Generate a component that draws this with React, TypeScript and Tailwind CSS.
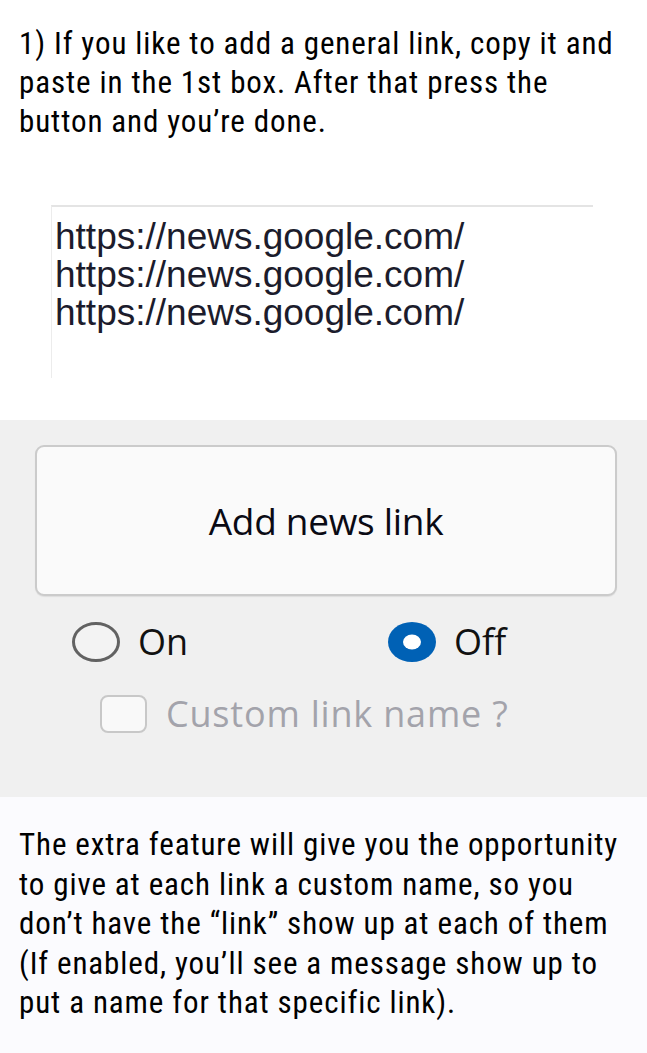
import { useState } from 'react';

const narrow = "font-['Liberation_Sans_Narrow','Arial_Narrow','Roboto_Condensed',sans-serif] font-stretch-condensed";

const Radio = ({ checked, label, onClick }: { checked: boolean; label: string; onClick: () => void }) => (
  <div className="flex items-center gap-[17px] cursor-pointer" onClick={onClick}>
    <svg width="50" height="42" viewBox="0 0 50 42">
      {checked ? (
        <>
          <ellipse cx="25" cy="21" rx="24" ry="20" fill="#0061b5" />
          <ellipse cx="25" cy="21" rx="9" ry="7.5" fill="#ffffff" />
        </>
      ) : (
        <ellipse cx="25" cy="21" rx="22.5" ry="18.5" fill="#f3f3f3" stroke="#626262" strokeWidth="3" />
      )}
    </svg>
    <span className="text-[36px] leading-none text-[#111]">{label}</span>
  </div>
);

export default function App() {
  const [on, setOn] = useState(false);

  return (
    <div className="w-[647px] h-[1053px] flex flex-col bg-white overflow-hidden">
      <div className="bg-white h-[420px] flex flex-col shrink-0">
        <p className={`${narrow} pt-[24px] px-[19px] text-[31px] leading-[39px] tracking-[0.9px] text-black`}>
          1) If you like to add a general link, copy it and
          <br />
          paste in the 1st box. After that press the
          <br />
          button and you’re done.
        </p>
        <div className="mt-[64px] ml-[51px] w-[542px] h-[173px] border-t-2 border-l border-t-[#e4e4e4] border-l-[#ececec] pl-[3px] pt-[11px] font-['Liberation_Sans',Arial,sans-serif] text-[37px] leading-[38px] text-[#1c1c2c]">
          <div>https://news.google.com/</div>
          <div>https://news.google.com/</div>
          <div>https://news.google.com/</div>
        </div>
      </div>

      <div className="bg-[#f0f0f0] h-[377px] shrink-0 flex flex-col pt-[25px] font-['Open_Sans',sans-serif]">
        <button className="ml-[35px] mr-[30px] h-[151px] shrink-0 rounded-[9px] border-2 border-[#cbcbcb] bg-[#fafafa] shadow-[0_1px_1px_rgba(0,0,0,0.08)] flex items-center justify-center text-[37px] text-[#0a0a14] tracking-[-0.3px]">
          Add news link
        </button>
        <div className="flex items-center pl-[71px] mt-[25px]">
          <div className="w-[316px]">
            <Radio checked={on} label="On" onClick={() => setOn(true)} />
          </div>
          <Radio checked={!on} label="Off" onClick={() => setOn(false)} />
        </div>
        <div className="flex items-center gap-[19px] pl-[100px] mt-[32px]">
          <div className="w-[47px] h-[38px] rounded-[8px] border-2 border-[#c8c8c8] bg-[#f9f9f9]" />
          <span className="text-[36px] leading-none tracking-[0.8px] text-[#a3a3ab]">Custom link name ?</span>
        </div>
      </div>

      <div className="flex-1 bg-[#fbfbfe]">
        <p className={`${narrow} pt-[28px] px-[19px] text-[31px] leading-[39.5px] tracking-[0.9px] text-black`}>
          The extra feature will give you the opportunity
          <br />
          to give at each link a custom name, so you
          <br />
          don’t have the “link” show up at each of them
          <br />
          (If enabled, you’ll see a message show up to
          <br />
          put a name for that specific link).
        </p>
      </div>
    </div>
  );
}
